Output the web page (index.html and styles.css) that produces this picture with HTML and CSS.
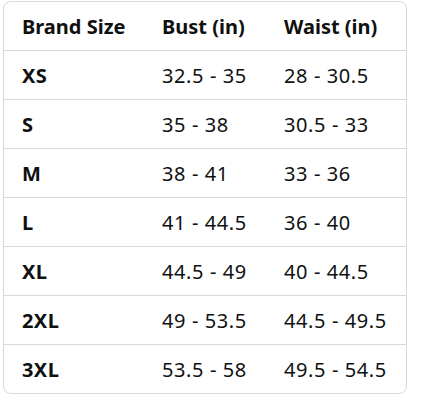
FILE: index.html
```html
<!DOCTYPE html>
<html>
<head>
<meta charset="utf-8">
<link rel="stylesheet" href="styles.css">
</head>
<body>
<div class="card">
  <div class="row head"><div>Brand Size</div><div>Bust (in)</div><div>Waist (in)</div></div>
  <div class="row"><div class="sz">XS</div><div>32.5 - 35</div><div>28 - 30.5</div></div>
  <div class="row"><div class="sz">S</div><div>35 - 38</div><div>30.5 - 33</div></div>
  <div class="row"><div class="sz">M</div><div>38 - 41</div><div>33 - 36</div></div>
  <div class="row"><div class="sz">L</div><div>41 - 44.5</div><div>36 - 40</div></div>
  <div class="row"><div class="sz">XL</div><div>44.5 - 49</div><div>40 - 44.5</div></div>
  <div class="row"><div class="sz">2XL</div><div>49 - 53.5</div><div>44.5 - 49.5</div></div>
  <div class="row"><div class="sz">3XL</div><div>53.5 - 58</div><div>49.5 - 54.5</div></div>
</div>
</body>
</html>
```
FILE: styles.css
```css
html, body { margin: 0; padding: 0; background: #fff; }
body { padding: 1px 0 0 3px; font-family: "Noto Sans", "Open Sans", sans-serif; color: #0f1111; }
.card {
  width: 402px;
  border: 1px solid #d5d9d9;
  border-radius: 8px;
  overflow: hidden;
}
.row {
  display: grid;
  grid-template-columns: 140px 122px 1fr;
  height: 48px;
  align-items: center;
  font-size: 20px;
  letter-spacing: 0.6px;
  border-top: 1px solid #d5d9d9;
}
.row:first-child { border-top: none; }
.row > div { padding-left: 18px; white-space: nowrap; }
.head { font-weight: 700; letter-spacing: 0; }
.sz { font-weight: 700; letter-spacing: 0.4px; }
```
